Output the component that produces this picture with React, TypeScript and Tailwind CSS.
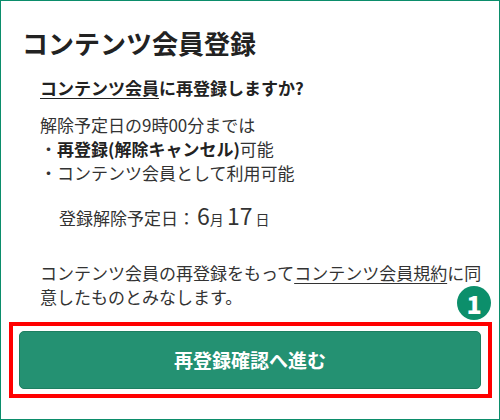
import React from "react";

const App = () => {
  return (
    <div
      className="relative box-border h-[420px] w-[500px] overflow-hidden border border-[#0b8d6b] bg-white text-[#333]"
      style={{ fontFamily: '"Noto Sans CJK JP", "Noto Sans", sans-serif' }}
    >
      <h1 className="ml-[21px] mt-[24px] text-[26px] font-bold leading-[36px] text-[#222]">
        コンテンツ会員登録
      </h1>

      <div className="ml-[39px] mr-[14px]">
        <p className="mt-[15px] text-[17px] font-bold leading-[24px] text-[#222]">
          <span className="underline decoration-1 underline-offset-[3px]">
            コンテンツ会員
          </span>
          に再登録しますか?
        </p>

        <div className="mt-[13px] text-[17px] leading-[24px]">
          <p>解除予定日の9時00分までは</p>
          <p>
            ・<span className="font-bold text-[#222]">再登録(解除キャンセル)</span>
            可能
          </p>
          <p>・コンテンツ会員として利用可能</p>
        </div>

        <p className="ml-[19px] mt-[15px] text-[17px] leading-[30px]">
          登録解除予定日：
          <span className="ml-[2px] text-[23px]">6</span>
          <span className="text-[14px]">月 </span>
          <span className="text-[23px]">17</span>
          <span className="ml-[3px] text-[14px]">日</span>
        </p>

        <p className="mt-[27px] text-[17px] leading-[24px]">
          コンテンツ会員の再登録をもって
          <span className="underline decoration-1 underline-offset-[3px]">
            コンテンツ会員規約
          </span>
          に同意したものとみなします。
        </p>
      </div>

      <div className="absolute left-[456px] top-[285px] flex h-[34px] w-[34px] items-center justify-center rounded-full bg-[#0c8f6b] text-[25px] font-black leading-none text-white">
        1
      </div>

      <div className="ml-[8px] mt-[13px] box-border h-[76px] w-[483px] border-4 border-[#ff0000] px-[6px] py-[5px]">
        <button className="flex h-full w-[462px] items-center justify-center rounded-[5px] border border-[#1d7f61] bg-[#249172] text-[19px] font-bold text-white">
          再登録確認へ進む
        </button>
      </div>
    </div>
  );
};

export default App;
